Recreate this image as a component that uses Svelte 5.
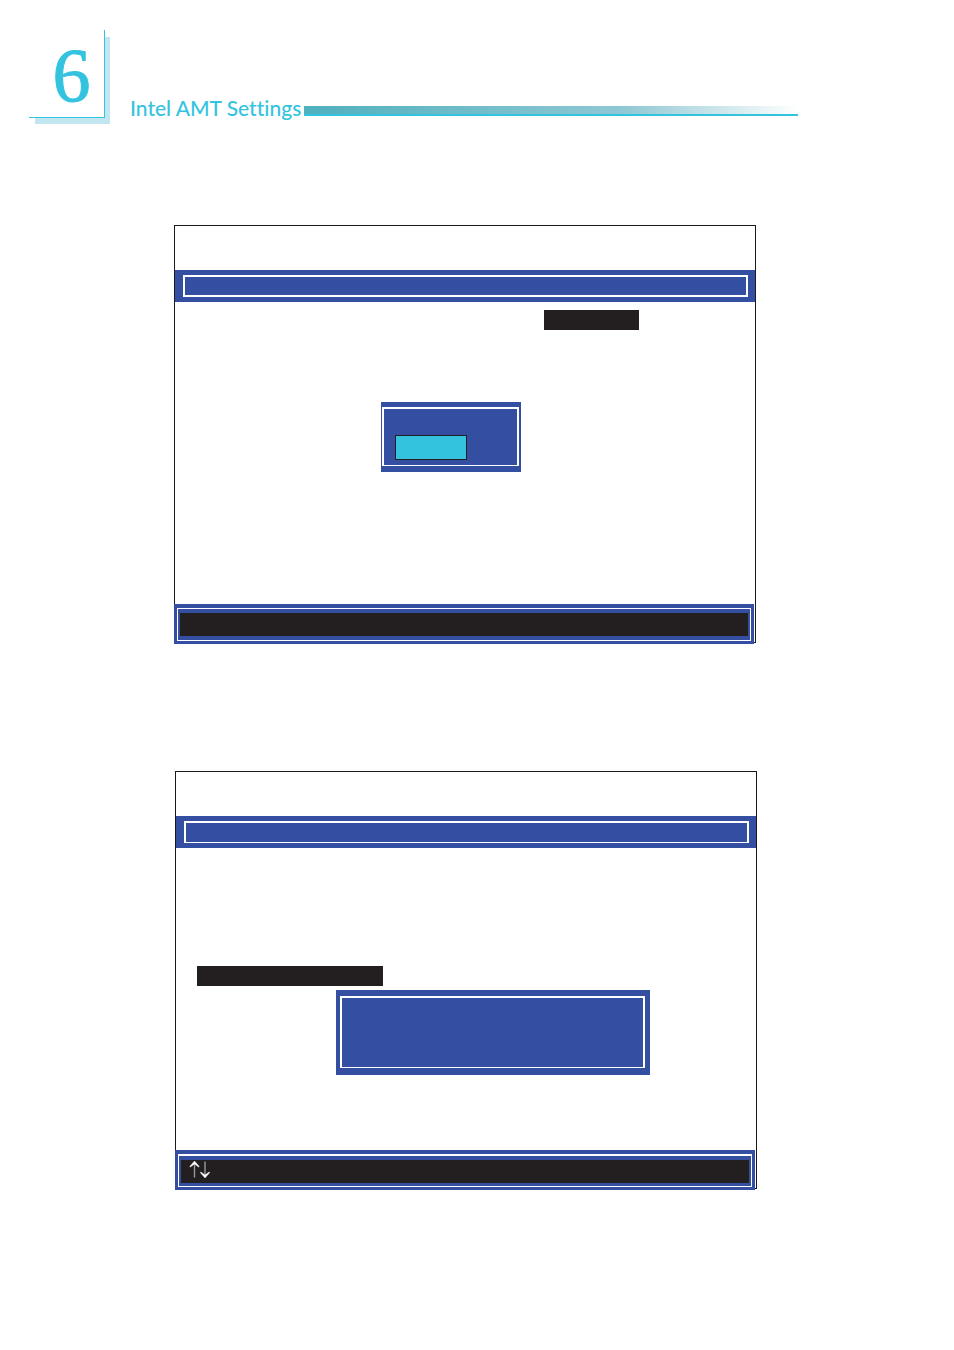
<script lang="ts">
    import type { Snippet } from "svelte";

    const chapter = 6;
    const title = "Intel AMT Settings";
</script>

{#snippet screen(name: string, body: Snippet, keys?: Snippet)}
    <section class="screen" aria-label={name}>
        <div class="menu-bar"><div class="frame"></div></div>
        <div class="screen-body">
            {@render body()}
        </div>
        <div class="key-bar">
            <div class="key-frame">
                <div class="keys">{@render keys?.()}</div>
            </div>
        </div>
    </section>
{/snippet}

{#snippet optionBody()}
    <div class="selected selected-value"></div>
    <div class="popup popup-options">
        <div class="frame"><div class="option"></div></div>
    </div>
{/snippet}

{#snippet messageBody()}
    <div class="selected selected-item"></div>
    <div class="popup popup-message"><div class="frame"></div></div>
{/snippet}

{#snippet arrowKeys()}
    <svg width="22" height="17" viewBox="0 0 22 17" role="img" aria-label="Up and down">
        <path class="stem" d="M5.5 3V16.500M16 0.500V14" />
        <path class="head" d="M5.500 0 10.300 5.500 9.600 6 5.500 3 1.400 6 0.700 5.500Z" />
        <path class="head" d="M16 17 20.800 11.500 20.100 11 16 14 11.900 11 11.200 11.500Z" />
    </svg>
{/snippet}

<main class="page">
    <header class="page-header">
        <div class="chapter">{chapter}</div>
        <h1>{title}</h1>
        <div class="rule"></div>
    </header>

    <div class="screens">
        {@render screen("Options", optionBody)}
        {@render screen("Message", messageBody, arrowKeys)}
    </div>
</main>

<style>
    :global(body) {
        margin: 0;
        background: #fff;
    }

    .page {
        --cyan: #34c3df;
        --blue: #344fa2;
        --ink: #231f20;
        padding: 30px 0 160px;
    }

    .page *,
    .page *::before {
        box-sizing: border-box;
    }

    /* Header */
    .page-header {
        position: relative;
        z-index: 0;
        display: flex;
        align-items: flex-end;
        padding: 0 156px 0 29px;
        color: var(--cyan);
    }

    .chapter {
        position: relative;
        flex: none;
        width: 76px;
        height: 88px;
        padding-left: 10px;
        border-right: 1px solid var(--cyan);
        border-bottom: 1px solid var(--cyan);
        background: #fff;
        font-family: "Liberation Serif", serif;
        font-size: 76px;
        line-height: 91px;
        text-align: center;
        -webkit-text-stroke: 1px var(--cyan);
    }

    /* offset shadow behind the number */
    .page-header::before {
        content: "";
        position: absolute;
        z-index: -1;
        top: 7px;
        left: 35px;
        width: 75px;
        height: 87px;
        background: #c1e6f0;
    }

    h1 {
        flex: none;
        margin: 0 3px 0 25px;
        font-family: Lato, "Open Sans", sans-serif;
        font-size: 21px;
        font-weight: 500;
        font-variant-ligatures: none;
        line-height: 20px;
    }

    .rule {
        flex: 1;
        height: 10px;
        margin-bottom: 2px;
        border-bottom: 2px solid var(--cyan);
        background: linear-gradient(
            to right,
            #4fb0be,
            #90c8d4 65%,
            #fff
        );
    }

    /* BIOS screens */
    .screens {
        display: flex;
        flex-direction: column;
        gap: 128px;
        padding: 107px 198px 0 174px;
    }

    .screen {
        border: 1px solid #1a1a1a;
    }

    .screen + .screen {
        margin: 0 -1px 0 1px;
    }

    .menu-bar {
        margin-top: 44px;
        padding: 5px 7px 5px 8px;
        background: var(--blue);
    }

    .menu-bar .frame {
        height: 22px;
    }

    .frame {
        border: 2px solid #fff;
    }

    .screen + .screen .frame {
        border-bottom-width: 1px;
    }

    .screen-body {
        display: flex;
        flex-direction: column;
        height: 302px;
    }

    .selected {
        height: 20px;
        background: var(--ink);
    }

    .selected-value {
        width: 95px;
        margin: 8px 0 0 369px;
    }

    .selected-item {
        width: 186px;
        margin: 118px 0 0 21px;
    }

    .popup {
        background: var(--blue);
    }

    .popup .frame {
        height: 100%;
        border-bottom-width: 1px;
    }

    .popup-options {
        width: 140px;
        height: 70px;
        margin: 72px 0 0 206px;
        padding: 5px 2px 6px 1px;
    }

    .popup-message {
        width: 314px;
        height: 85px;
        margin: 4px 0 0 160px;
        padding: 6px 5px 7px 4px;
    }

    .option {
        width: 72px;
        height: 25px;
        margin: 26px 0 0 11px;
        border: 1px solid var(--ink);
        background: var(--cyan);
    }

    /* the key bar lies over the left and bottom border */
    .key-bar {
        position: relative;
        height: 40px;
        margin: 0 1px -2px -1px;
        padding: 4px 3px 3px;
        background: var(--blue);
    }

    .key-frame {
        height: 100%;
        padding: 4px 2px;
        border: 1px solid #fff;
    }

    .screen + .screen .key-frame {
        border-top-width: 2px;
    }

    .keys {
        height: 23px;
        padding: 1px 0 0 8px;
        background: var(--ink);
    }

    .keys svg {
        display: block;
    }

    .stem {
        fill: none;
        stroke: #999;
        stroke-width: 1.4;
    }

    .head {
        fill: #fff;
        stroke: #fff;
        stroke-width: 0.4;
    }
</style>
